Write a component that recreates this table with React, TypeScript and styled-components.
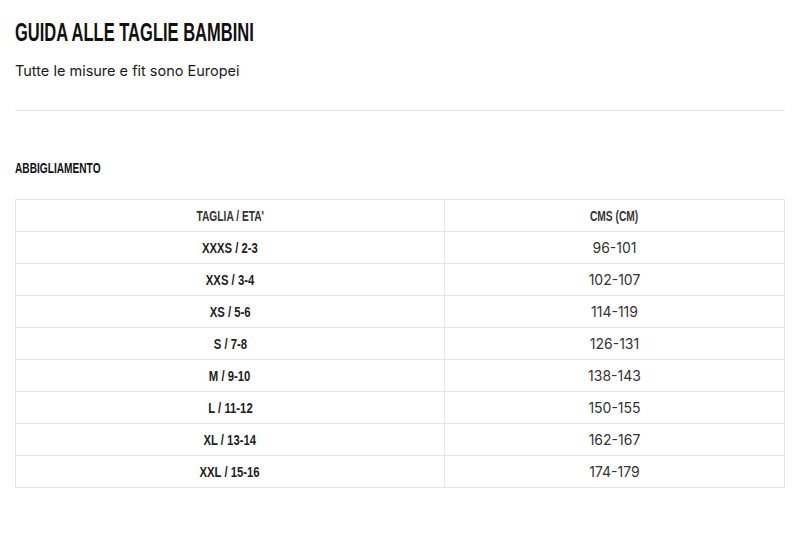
import React from 'react';
import styled, { createGlobalStyle } from 'styled-components';

const GlobalStyle = createGlobalStyle`
  body {
    margin: 0;
    background: #ffffff;
    font-family: Inter, 'Liberation Sans', sans-serif;
  }
`;

const condensed = `'Liberation Sans', Arial, sans-serif`;

const Page = styled.div`
  padding: 16px 15px 0;
`;

// Oswald-like narrow caps: a bold grotesque squeezed horizontally
const Narrow = styled.span<{ $scale: number; $origin?: string }>`
  display: inline-block;
  white-space: nowrap;
  transform: scaleX(${(p) => p.$scale});
  transform-origin: ${(p) => p.$origin || 'center'};
`;

const Title = styled.h1`
  margin: 0;
  font-family: ${condensed};
  font-weight: 700;
  font-size: 26px;
  line-height: 32px;
  color: #111;
  text-transform: uppercase;
`;

const Subtitle = styled.p`
  margin: 13px 0 0;
  font-size: 14.5px;
  line-height: 20px;
  color: #1a1a1a;
`;

const Divider = styled.hr`
  margin: 29px 0 0;
  border: none;
  border-top: 1px solid #e4e4e4;
`;

const SectionTitle = styled.h2`
  margin: 47px 0 0;
  font-family: ${condensed};
  font-weight: 700;
  font-size: 14.5px;
  line-height: 20px;
  color: #111;
`;

const Table = styled.table`
  margin-top: 21px;
  width: 100%;
  border-collapse: collapse;
  table-layout: fixed;
`;

const HeadCell = styled.th`
  height: 31px;
  padding: 0;
  border: 1px solid #e6e6e6;
  font-family: ${condensed};
  font-weight: 700;
  font-size: 14px;
  color: #333;
  text-align: center;
`;

const Cell = styled.td<{ $bold?: boolean }>`
  height: 31px;
  padding: 0;
  border: 1px solid #e6e6e6;
  text-align: center;
  color: ${(p) => (p.$bold ? '#222' : '#333')};
  font-family: ${(p) => (p.$bold ? condensed : `Inter, 'Liberation Sans', sans-serif`)};
  font-weight: ${(p) => (p.$bold ? 700 : 400)};
  font-size: ${(p) => (p.$bold ? '14.5px' : '14px')};
`;

const rows = [
  ['XXXS / 2-3', '96-101'],
  ['XXS / 3-4', '102-107'],
  ['XS / 5-6', '114-119'],
  ['S / 7-8', '126-131'],
  ['M / 9-10', '138-143'],
  ['L / 11-12', '150-155'],
  ['XL / 13-14', '162-167'],
  ['XXL / 15-16', '174-179'],
];

const App: React.FC = () => {
  return (
    <Page>
      <GlobalStyle />
      <Title>
        <Narrow $scale={0.635} $origin="left">Guida alle taglie bambini</Narrow>
      </Title>
      <Subtitle>Tutte le misure e fit sono Europei</Subtitle>
      <Divider />
      <SectionTitle>
        <Narrow $scale={0.7} $origin="left">ABBIGLIAMENTO</Narrow>
      </SectionTitle>
      <Table>
        <colgroup>
          <col style={{ width: '429px' }} />
          <col />
        </colgroup>
        <thead>
          <tr>
            <HeadCell><Narrow $scale={0.73}>TAGLIA / ETA'</Narrow></HeadCell>
            <HeadCell><Narrow $scale={0.73}>CMS (CM)</Narrow></HeadCell>
          </tr>
        </thead>
        <tbody>
          {rows.map(([size, cm]) => (
            <tr key={size}>
              <Cell $bold><Narrow $scale={0.78}>{size}</Narrow></Cell>
              <Cell>{cm}</Cell>
            </tr>
          ))}
        </tbody>
      </Table>
    </Page>
  );
};

export default App;
